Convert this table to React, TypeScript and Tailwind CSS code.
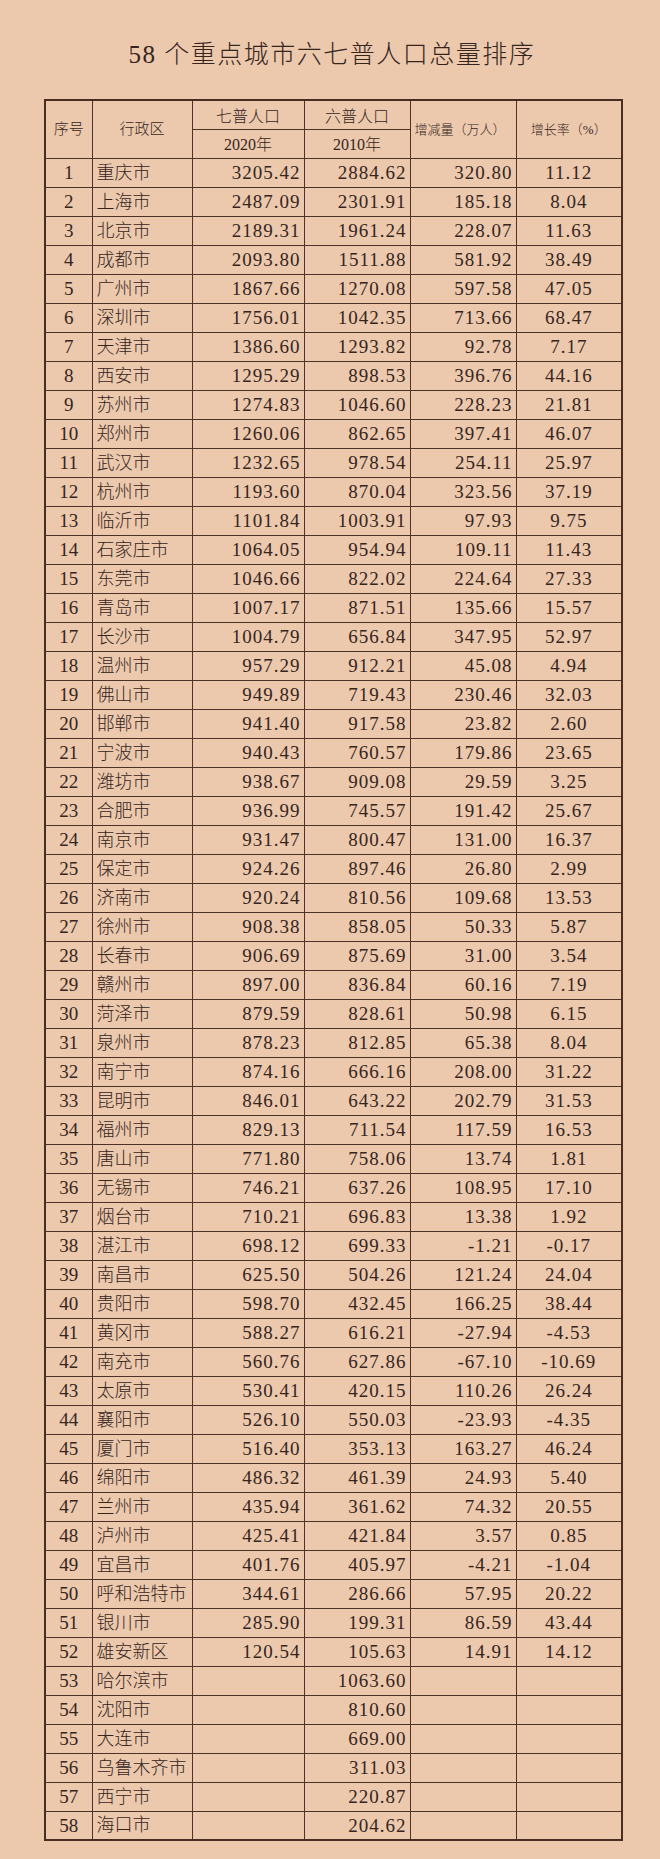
import React from "react";

type Row = [number, string, string, string, string, string];

const rows: Row[] = [
  [1, "重庆市", "3205.42", "2884.62", "320.80", "11.12"],
  [2, "上海市", "2487.09", "2301.91", "185.18", "8.04"],
  [3, "北京市", "2189.31", "1961.24", "228.07", "11.63"],
  [4, "成都市", "2093.80", "1511.88", "581.92", "38.49"],
  [5, "广州市", "1867.66", "1270.08", "597.58", "47.05"],
  [6, "深圳市", "1756.01", "1042.35", "713.66", "68.47"],
  [7, "天津市", "1386.60", "1293.82", "92.78", "7.17"],
  [8, "西安市", "1295.29", "898.53", "396.76", "44.16"],
  [9, "苏州市", "1274.83", "1046.60", "228.23", "21.81"],
  [10, "郑州市", "1260.06", "862.65", "397.41", "46.07"],
  [11, "武汉市", "1232.65", "978.54", "254.11", "25.97"],
  [12, "杭州市", "1193.60", "870.04", "323.56", "37.19"],
  [13, "临沂市", "1101.84", "1003.91", "97.93", "9.75"],
  [14, "石家庄市", "1064.05", "954.94", "109.11", "11.43"],
  [15, "东莞市", "1046.66", "822.02", "224.64", "27.33"],
  [16, "青岛市", "1007.17", "871.51", "135.66", "15.57"],
  [17, "长沙市", "1004.79", "656.84", "347.95", "52.97"],
  [18, "温州市", "957.29", "912.21", "45.08", "4.94"],
  [19, "佛山市", "949.89", "719.43", "230.46", "32.03"],
  [20, "邯郸市", "941.40", "917.58", "23.82", "2.60"],
  [21, "宁波市", "940.43", "760.57", "179.86", "23.65"],
  [22, "潍坊市", "938.67", "909.08", "29.59", "3.25"],
  [23, "合肥市", "936.99", "745.57", "191.42", "25.67"],
  [24, "南京市", "931.47", "800.47", "131.00", "16.37"],
  [25, "保定市", "924.26", "897.46", "26.80", "2.99"],
  [26, "济南市", "920.24", "810.56", "109.68", "13.53"],
  [27, "徐州市", "908.38", "858.05", "50.33", "5.87"],
  [28, "长春市", "906.69", "875.69", "31.00", "3.54"],
  [29, "赣州市", "897.00", "836.84", "60.16", "7.19"],
  [30, "菏泽市", "879.59", "828.61", "50.98", "6.15"],
  [31, "泉州市", "878.23", "812.85", "65.38", "8.04"],
  [32, "南宁市", "874.16", "666.16", "208.00", "31.22"],
  [33, "昆明市", "846.01", "643.22", "202.79", "31.53"],
  [34, "福州市", "829.13", "711.54", "117.59", "16.53"],
  [35, "唐山市", "771.80", "758.06", "13.74", "1.81"],
  [36, "无锡市", "746.21", "637.26", "108.95", "17.10"],
  [37, "烟台市", "710.21", "696.83", "13.38", "1.92"],
  [38, "湛江市", "698.12", "699.33", "-1.21", "-0.17"],
  [39, "南昌市", "625.50", "504.26", "121.24", "24.04"],
  [40, "贵阳市", "598.70", "432.45", "166.25", "38.44"],
  [41, "黄冈市", "588.27", "616.21", "-27.94", "-4.53"],
  [42, "南充市", "560.76", "627.86", "-67.10", "-10.69"],
  [43, "太原市", "530.41", "420.15", "110.26", "26.24"],
  [44, "襄阳市", "526.10", "550.03", "-23.93", "-4.35"],
  [45, "厦门市", "516.40", "353.13", "163.27", "46.24"],
  [46, "绵阳市", "486.32", "461.39", "24.93", "5.40"],
  [47, "兰州市", "435.94", "361.62", "74.32", "20.55"],
  [48, "泸州市", "425.41", "421.84", "3.57", "0.85"],
  [49, "宜昌市", "401.76", "405.97", "-4.21", "-1.04"],
  [50, "呼和浩特市", "344.61", "286.66", "57.95", "20.22"],
  [51, "银川市", "285.90", "199.31", "86.59", "43.44"],
  [52, "雄安新区", "120.54", "105.63", "14.91", "14.12"],
  [53, "哈尔滨市", "", "1063.60", "", ""],
  [54, "沈阳市", "", "810.60", "", ""],
  [55, "大连市", "", "669.00", "", ""],
  [56, "乌鲁木齐市", "", "311.03", "", ""],
  [57, "西宁市", "", "220.87", "", ""],
  [58, "海口市", "", "204.62", "", ""],
];

const cell = "border border-[#4f3227] p-0 align-middle";
const num = "text-right pr-[3px] text-[19px] tracking-[1px]";

export default function App() {
  return (
    <div
      className="min-h-[1859px] w-[660px] bg-[#ecc9ad] text-[#35251d] pt-[40px]"
      style={{ fontFamily: '"Liberation Serif", "Noto Sans CJK SC", serif' }}
    >
      <h1 className="text-center text-[25px] leading-[30px] font-light tracking-[1.5px] pl-[4px]">
        58 个重点城市六七普人口总量排序
      </h1>
      <div className="pl-[44px] mt-[29px]">
        <table className="table-fixed border-collapse border-2 border-[#4a2c22] w-[577px]">
          <colgroup>
            <col className="w-[47px]" />
            <col className="w-[100px]" />
            <col className="w-[112px]" />
            <col className="w-[106px]" />
            <col className="w-[106px]" />
            <col className="w-[106px]" />
          </colgroup>
          <thead>
            <tr className="h-[29px]">
              <th rowSpan={2} className={`${cell} text-[15px] font-light leading-none`}>
                序号
              </th>
              <th rowSpan={2} className={`${cell} text-[15px] font-light leading-none`}>
                行政区
              </th>
              <th className={`${cell} text-[16px] font-light leading-none pt-[4px]`}>七普人口</th>
              <th className={`${cell} text-[16px] font-light leading-none pt-[4px]`}>六普人口</th>
              <th rowSpan={2} className={`${cell} text-[13px] font-light leading-none text-left pl-[4px]`}>
                增减量（万人）
              </th>
              <th rowSpan={2} className={`${cell} text-[13px] font-light leading-none`}>
                增长率（%）
              </th>
            </tr>
            <tr className="h-[29px]">
              <th className={`${cell} text-[16px] font-light leading-none pt-[2px]`}>2020年</th>
              <th className={`${cell} text-[16px] font-light leading-none pt-[2px]`}>2010年</th>
            </tr>
          </thead>
          <tbody>
            {rows.map((r) => (
              <tr key={r[0]} className="h-[29px]">
                <td className={`${cell} text-center text-[19px] leading-none`}>{r[0]}</td>
                <td className={`${cell} text-left pl-[4px] text-[18px] font-light leading-none whitespace-nowrap`}>
                  {r[1]}
                </td>
                <td className={`${cell} ${num} leading-none`}>{r[2]}</td>
                <td className={`${cell} ${num} leading-none`}>{r[3]}</td>
                <td className={`${cell} ${num} leading-none`}>{r[4]}</td>
                <td className={`${cell} text-center text-[19px] tracking-[1px] leading-none`}>{r[5]}</td>
              </tr>
            ))}
          </tbody>
        </table>
      </div>
    </div>
  );
}
